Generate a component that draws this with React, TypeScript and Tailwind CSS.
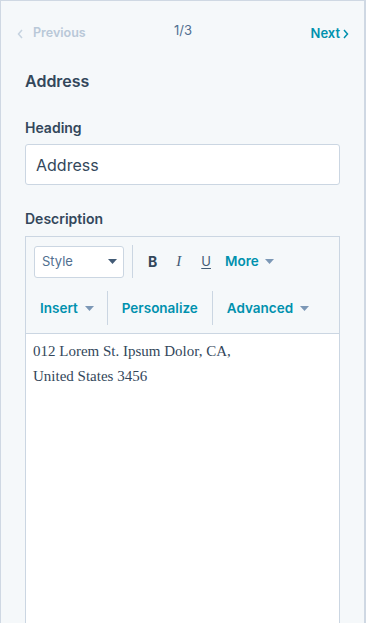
import React from "react";

const Caret = ({ color = "#7c98b6" }: { color?: string }) => (
  <svg width="9" height="5" viewBox="0 0 9 5" className="shrink-0">
    <path d="M0 0 L9 0 L4.5 5 Z" fill={color} />
  </svg>
);

export default function App() {
  return (
    <div
      className="h-[623px] w-full overflow-hidden border-l border-t border-r-2 border-[#cfd8e3] bg-[#f5f8fa] text-[#33475b]"
      style={{ fontFamily: "Inter, 'Noto Sans', sans-serif" }}
    >
      {/* nav */}
      <div className="mt-[23px] grid h-[18px] grid-cols-[1fr_auto_1fr] items-center pl-[16px] pr-[15px]">
        <div className="flex items-center gap-[10px] text-[12.5px] font-semibold text-[#b9c8d8]">
          <svg width="6" height="10" viewBox="0 0 6 10">
            <path d="M5 1 L1.5 5 L5 9" stroke="#c6d3e0" strokeWidth="1.5" fill="none" />
          </svg>
          <span>Previous</span>
        </div>
        <div className="-mt-[6px] text-[13px] text-[#516f90]">1/3</div>
        <div className="flex items-center justify-end gap-[3px] text-[13px] font-semibold text-[#0091ae]">
          <span>Next</span>
          <svg width="6" height="10" viewBox="0 0 6 10">
            <path d="M1 1 L4.5 5 L1 9" stroke="#0091ae" strokeWidth="1.5" fill="none" />
          </svg>
        </div>
      </div>

      <div className="pl-[24px] pr-[24px]">
        <div className="mt-[27px] h-[24px] text-[16px] font-semibold leading-[24px] text-[#33475b]">Address</div>

        <div className="mt-[25px] h-[20px] text-[14px] font-semibold leading-[20px]">Heading</div>
        <div className="mt-[6px] flex h-[41px] items-center rounded-[3px] border border-[#cbd6e2] bg-white px-[10px] text-[16px] text-[#33475b]">
          Address
        </div>

        <div className="mt-[24px] h-[20px] text-[14px] font-semibold leading-[20px]">Description</div>
        <div className="mt-[7px] h-[420px] border border-[#cbd6e2] bg-white">
          <div className="border-b border-[#cbd6e2] bg-[#f5f8fa]">
            {/* row 1 */}
            <div className="flex items-center pl-[8px] pt-[8px]">
              <div className="flex h-[32px] w-[90px] items-center justify-between rounded-[3px] border border-[#cbd6e2] bg-white pl-[7px] pr-[6px]">
                <span className="text-[13px] text-[#516f90]">Style</span>
                <Caret color="#425b76" />
              </div>
              <div className="ml-[8px] h-[33px] w-px bg-[#cbd6e2]" />
              <span className="ml-[15px] text-[14px] font-bold text-[#33475b]">B</span>
              <span
                className="ml-[19px] text-[15px] italic text-[#425b76]"
                style={{ fontFamily: "'Liberation Serif', serif" }}
              >
                I
              </span>
              <span className="ml-[20px] text-[13px] text-[#425b76] underline underline-offset-2">U</span>
              <span className="ml-[14px] text-[13.5px] font-semibold text-[#0091ae]">More</span>
              <span className="ml-[6px]">
                <Caret />
              </span>
            </div>
            {/* row 2 */}
            <div className="flex items-center pl-[14px] pt-[13px] pb-[8px]">
              <span className="text-[13.5px] font-semibold text-[#0091ae]">Insert</span>
              <span className="ml-[7px]">
                <Caret />
              </span>
              <div className="ml-[13px] h-[34px] w-px bg-[#cbd6e2]" />
              <span className="ml-[14px] text-[13.5px] font-semibold text-[#0091ae]">Personalize</span>
              <div className="ml-[14px] h-[34px] w-px bg-[#cbd6e2]" />
              <span className="ml-[14px] text-[13.5px] font-semibold text-[#0091ae]">Advanced</span>
              <span className="ml-[7px]">
                <Caret />
              </span>
            </div>
          </div>
          <div
            className="px-[7px] pt-[5px] text-[15px] leading-[25px] text-[#33475b]"
            style={{ fontFamily: "'Liberation Serif', 'DejaVu Serif', serif" }}
          >
            <div>012 Lorem St. Ipsum Dolor, CA,</div>
            <div>United States 3456</div>
          </div>
        </div>
      </div>
    </div>
  );
}
